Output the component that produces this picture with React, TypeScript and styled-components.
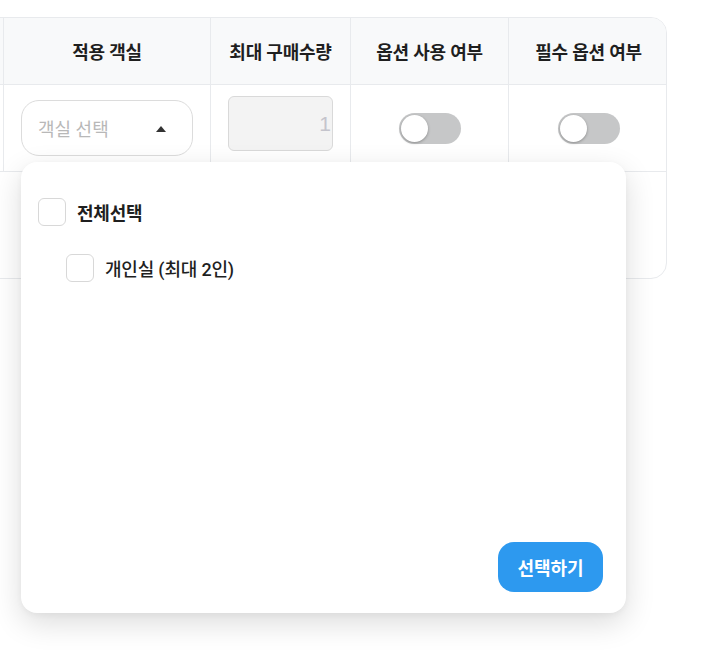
import React from "react";
import styled, { createGlobalStyle } from "styled-components";

const Global = createGlobalStyle`
  html, body { margin: 0; padding: 0; background: #fff; }
  body { font-family: Roboto, "Noto Sans CJK KR", "Noto Sans", sans-serif; color: #222; }
  * { box-sizing: border-box; }
`;

const Page = styled.div`
  width: 703px;
  height: 656px;
  overflow: hidden;
  padding-top: 17px;
  position: relative;
`;

const TableWrap = styled.div`
  margin-left: -40px;
  width: 707px;
  position: relative;
`;

const Table = styled.div`
  display: grid;
  grid-template-columns: 43px 207px 140px 158px 159px;
  border: 1px solid #e8eaed;
  border-radius: 0 16px 16px 0;
  overflow: hidden;
  background: #fff;
`;

const HeadCell = styled.div<{ $last?: boolean }>`
  height: 67px;
  background: #f8f9fa;
  display: flex;
  align-items: center;
  justify-content: center;
  font-size: 18px;
  font-weight: 700;
  letter-spacing: -0.2px;
  color: #1f1f1f;
  border-bottom: 1px solid #e8eaed;
  border-right: ${(p) => (p.$last ? "none" : "1px solid #e8eaed")};
`;

const Cell = styled.div<{ $last?: boolean; $align?: string }>`
  height: 87px;
  display: flex;
  align-items: center;
  justify-content: ${(p) => p.$align || "center"};
  border-bottom: 1px solid #e8eaed;
  border-right: ${(p) => (p.$last ? "none" : "1px solid #e8eaed")};
  position: relative;
`;

const EmptyRow = styled.div`
  grid-column: 1 / -1;
  height: 106px;
`;

const SelectBox = styled.div`
  width: 172px;
  height: 56px;
  border: 1px solid #dcdcdc;
  border-radius: 18px;
  display: flex;
  align-items: center;
  justify-content: space-between;
  padding: 0 26px 0 16px;
  font-size: 18px;
  color: #b8b8b8;
  margin-left: 17px;
`;

const Caret = styled.span`
  width: 0;
  height: 0;
  border-left: 5.5px solid transparent;
  border-right: 5.5px solid transparent;
  border-bottom: 6px solid #333;
  margin-top: 1px;
`;

const NumberBox = styled.div`
  width: 105px;
  height: 55px;
  background: #f3f3f3;
  border: 1px solid #d9d9d9;
  border-radius: 6px;
  display: flex;
  align-items: center;
  justify-content: flex-end;
  padding-right: 1px;
  font-family: "Liberation Sans", Arial, sans-serif;
  font-size: 21px;
  color: #c4c4cc;
  margin-bottom: 9px;
  overflow: hidden;
`;

const Toggle = styled.div`
  width: 62px;
  height: 31px;
  border-radius: 16px;
  background: #c6c7c8;
  position: relative;
  &::after {
    content: "";
    position: absolute;
    left: 2px;
    top: 2px;
    width: 27px;
    height: 27px;
    border-radius: 50%;
    background: #fff;
    box-shadow: 0 1px 3px rgba(0, 0, 0, 0.3);
  }
`;

const Panel = styled.div`
  position: absolute;
  left: 61px;
  top: 145px;
  width: 605px;
  height: 451px;
  background: #fff;
  border-radius: 16px;
  box-shadow: 0 10px 30px rgba(0, 0, 0, 0.14), 0 2px 6px rgba(0, 0, 0, 0.04);
  padding: 36px 23px 21px 17px;
  display: flex;
  flex-direction: column;
  z-index: 10;
`;

const OptionRow = styled.label<{ $indent?: boolean }>`
  display: flex;
  align-items: center;
  gap: 11px;
  height: 28px;
  margin-left: ${(p) => (p.$indent ? "28px" : "0")};
  margin-bottom: 28px;
  font-size: 18px;
  font-weight: ${(p) => (p.$indent ? 500 : 700)};
  letter-spacing: -0.2px;
  color: #1f1f1f;
`;

const Check = styled.span`
  width: 28px;
  height: 28px;
  border: 1px solid #d8d8d8;
  border-radius: 6px;
  background: #fff;
`;

const Footer = styled.div`
  margin-top: auto;
  display: flex;
  justify-content: flex-end;
`;

const Button = styled.button`
  width: 105px;
  height: 50px;
  border: none;
  border-radius: 16px;
  background: #2d99ef;
  color: #fff;
  font-family: "Noto Sans CJK KR", "Noto Sans", sans-serif;
  font-size: 18px;
  font-weight: 700;
  padding: 0;
`;

export default function App() {
  return (
    <>
      <Global />
      <Page>
        <TableWrap>
          <Table>
            <HeadCell />
            <HeadCell>적용 객실</HeadCell>
            <HeadCell>최대 구매수량</HeadCell>
            <HeadCell>옵션 사용 여부</HeadCell>
            <HeadCell $last>필수 옵션 여부</HeadCell>
            <Cell />
            <Cell $align="flex-start">
              <SelectBox>
                <span>객실 선택</span>
                <Caret />
              </SelectBox>
            </Cell>
            <Cell>
              <NumberBox>1</NumberBox>
            </Cell>
            <Cell>
              <Toggle />
            </Cell>
            <Cell $last>
              <Toggle />
            </Cell>
            <EmptyRow />
          </Table>
          <Panel>
            <OptionRow>
              <Check />
              전체선택
            </OptionRow>
            <OptionRow $indent>
              <Check />
              개인실 (최대 2인)
            </OptionRow>
            <Footer>
              <Button>선택하기</Button>
            </Footer>
          </Panel>
        </TableWrap>
      </Page>
    </>
  );
}
